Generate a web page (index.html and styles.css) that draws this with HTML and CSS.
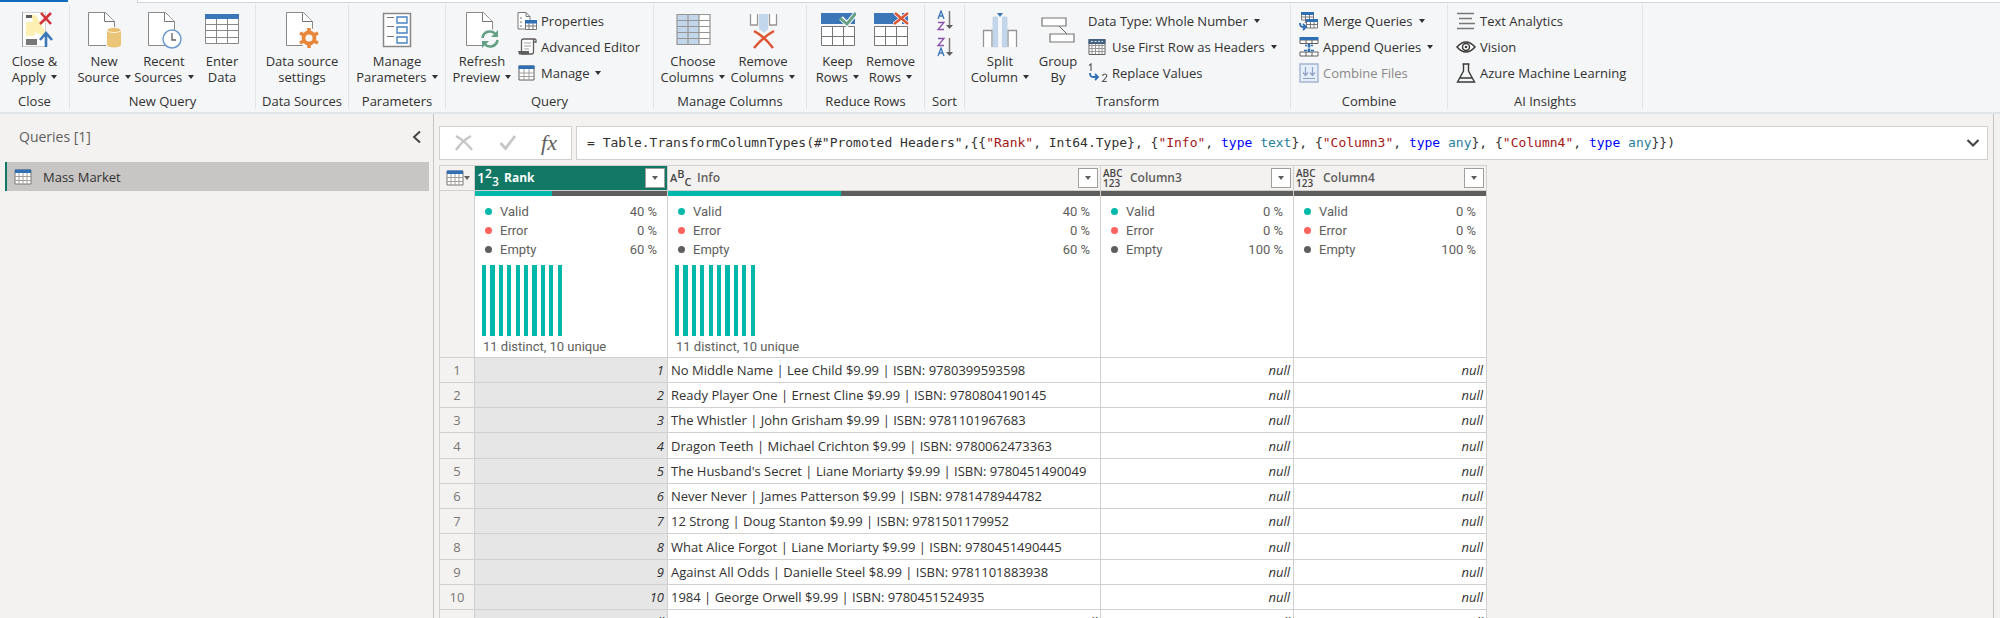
FILE: index.html
```html
<!DOCTYPE html>
<html lang="en">
<head>
<meta charset="utf-8">
<title>Power Query Editor</title>
<link rel="stylesheet" href="styles.css">
</head>
<body>
<svg class="defs" aria-hidden="true">
  <symbol id="i-page" viewBox="0 0 36 38"><path d="M2.500 1.500h17l9 9v24h-26z" fill="#fff" stroke="#8a8886"/><path d="M18.500 1.500v9h10" fill="#fff" stroke="#797775"/></symbol>
  <symbol id="i-grid" viewBox="0 0 18 16"><path d="M1 1h16v14H1z" fill="#fff" stroke="#797775"/><path d="M1 7.500h16M1 11.500h16M5 4v11M9 4v11M13 4v11" stroke="#a19f9d" fill="none"/><path d="M1 .5h16v3.500H1z" fill="#2f6fb3"/></symbol>
</svg>
<div class="tabs"><span class="tab-file"></span><span class="tab-home"></span><span class="tab-rest"></span></div>
<header class="ribbon">
  <section class="group">
    <div class="tools">
      <button class="big w-close"><svg width="36" height="38" viewBox="0 0 36 38"><path d="M5.500 1.500h23v34h-23z" fill="#fff" stroke="#d2d0ce"/><path d="M5.500 1v35" stroke="#a19f9d"/><path d="M9 11h9v14H9zM14 4h5l10 18v4l-10-4z" fill="#fdf0b2"/><path d="M9 4h6v3H9z" fill="#605e5c"/><path d="M9 28h11v6H9z" fill="#797775"/><path d="M24 2l10 11M34 2L23 13" stroke="#d13438" stroke-width="2.600"/><path d="M29 36V23M23 29l6-7 6 7" fill="none" stroke="#3b78b5" stroke-width="2.600"/></svg><span>Close &amp;<br>Apply <i class="caret"></i></span></button>
    </div>
    <h2>Close</h2>
  </section>
  <section class="group">
    <div class="tools">
      <button class="big w-60"><svg width="36" height="38" viewBox="0 0 36 38"><use href="#i-page"/><path d="M20 18h16v18H20z" fill="#f5f6f8"/><path d="M21 19v15a7 2.500 0 0 0 14 0V19z" fill="#ecc678"/><ellipse cx="28" cy="19" rx="7" ry="2.500" fill="#e8bf6e" stroke="#fff" stroke-width=".8"/></svg><span>New<br>Source <i class="caret"></i></span></button>
      <button class="big w-60"><svg width="36" height="38" viewBox="0 0 36 38"><use href="#i-page"/><circle cx="26" cy="28" r="9" fill="#fff" stroke="#6d9bcd" stroke-width="1.500"/><path d="M26 22v7h4" fill="none" stroke="#605e5c" stroke-width="1.300"/></svg><span>Recent<br>Sources <i class="caret"></i></span></button>
      <button class="big w-56"><svg width="36" height="38" viewBox="0 0 36 38"><path d="M1.500 4.500h33v28h-33z" fill="#fff" stroke="#8a8886"/><path d="M1 13.500h34M1 19.500h34M1 26.500h34M12.500 8v24M23.500 8v24" stroke="#8a8886"/><path d="M1 3h34v5H1z" fill="#3a76b8"/></svg><span>Enter<br>Data</span></button>
    </div>
    <h2>New Query</h2>
  </section>
  <section class="group">
    <div class="tools">
      <button class="big w-84"><svg width="36" height="38" viewBox="0 0 36 38"><use href="#i-page"/><circle cx="25" cy="27" r="10" fill="#f5f6f8"/><circle cx="25" cy="27" r="5.500" fill="none" stroke="#e8873a" stroke-width="3.800"/><path d="M25 17v4M25 33v4M16 22l4 2M30 30l4 2M16 32l4-2M30 24l4-2" stroke="#e8873a" stroke-width="3.600"/></svg><span>Data source<br>settings</span></button>
    </div>
    <h2>Data Sources</h2>
  </section>
  <section class="group">
    <div class="tools">
      <button class="big w-88"><svg width="36" height="38" viewBox="0 0 36 38"><path d="M4.500 2.500h27v33h-27z" fill="#fff" stroke="#8a8886" stroke-width="1.500"/><path d="M8 6.500h7M8 15.500h7M8 25.500h7" stroke="#797775"/><path d="M18 6h10v6H18zM18 16h10v6H18zM18 26h10v6H18z" fill="#fff" stroke="#4a84c4" stroke-width="1.400"/></svg><span>Manage<br>Parameters <i class="caret"></i></span></button>
    </div>
    <h2>Parameters</h2>
  </section>
  <section class="group">
    <div class="tools">
      <button class="big w-64"><svg width="36" height="38" viewBox="0 0 36 38"><use href="#i-page"/><circle cx="26" cy="28" r="10" fill="#f5f6f8"/><path d="M18.500 27a7.500 7.500 0 0 1 13-4M33.500 29a7.500 7.500 0 0 1-13 4" fill="none" stroke="#63a084" stroke-width="2.600"/><path d="M34 19v7h-7zM18 37v-7h7z" fill="#63a084"/></svg><span>Refresh<br>Preview <i class="caret"></i></span></button>
      <div class="stack">
        <button class="small"><svg width="20" height="20" viewBox="0 0 20 20"><path d="M1 1.500h8l4 4V18H1z" fill="#fff" stroke="#797775"/><path d="M9 1.500v4h4M3 7h2M3 11h2M3 15h2" fill="none" stroke="#797775"/><path d="M8.500 10.500h11v8h-11z" fill="#fff" stroke="#797775"/><path d="M8 15h12M12 12v7M16 12v7" stroke="#797775"/><path d="M8 9h12v3.500H8z" fill="#2f6fb3"/></svg>Properties</button>
        <button class="small"><svg width="20" height="20" viewBox="0 0 20 20"><path d="M4.500 14V4q0-2 2-2h10v13q0 2-2 2H4" fill="#fff" stroke="#605e5c" stroke-width="1.300"/><path d="M16 5h3V3q0-1-2-1" fill="none" stroke="#605e5c" stroke-width="1.300"/><path d="M7 6h7M7 9h7M7 12h5" stroke="#a19f9d"/><path d="M1 14h11v3.500H2z" fill="#605e5c"/></svg>Advanced Editor</button>
        <button class="small"><svg width="20" height="18" viewBox="0 0 20 18"><path d="M2 2h15v14H2z" fill="#fff" stroke="#605e5c"/><path d="M2 9h15M2 12.500h15M7 5v11M12 5v11" stroke="#a19f9d"/><path d="M1.500 1.500h16V5h-16z" fill="#2f6fb3"/></svg>Manage <i class="caret"></i></button>
      </div>
    </div>
    <h2>Query</h2>
  </section>
  <section class="group">
    <div class="tools">
      <button class="big w-70"><svg width="36" height="38" viewBox="0 0 36 38"><path d="M2 3.500h33v30H2z" fill="#fff"/><path d="M2 3.500h22v30H2z" fill="#c3d7ec"/><path d="M2 3.500h33v30H2zM2 9.500h33M2 15.500h33M2 21.500h33M2 27.500h33M13 3v30M24 3v30" fill="none" stroke="#979593" stroke-width="1.200"/></svg><span>Choose<br>Columns <i class="caret"></i></span></button>
      <button class="big w-70"><svg width="36" height="38" viewBox="0 0 36 38"><path d="M5.500 3v11h7V3M31.500 3v11h-7V3" fill="#fff" stroke="#979593" stroke-width="1.300"/><path d="M14 3h9v15l-4 4-5-4z" fill="#c3d7ec"/><path d="M9 20q11 6 19 17M29 20Q18 26 9 37" fill="none" stroke="#dc5535" stroke-width="2.500"/></svg><span>Remove<br>Columns <i class="caret"></i></span></button>
    </div>
    <h2>Manage Columns</h2>
  </section>
  <section class="group">
    <div class="tools">
      <button class="big w-53"><svg width="36" height="38" viewBox="0 0 36 38"><path d="M1 2h34v11H1z" fill="#3a76b8"/><path d="M1.500 15.500h33v19h-33zM1 25.500h34M12.500 15v20M23.500 15v20" fill="#fff" stroke="#797775"/><path d="M21 7l6 6L37 1" fill="none" stroke="#f5f6f8" stroke-width="5"/><path d="M20 7l7 6L36 2" fill="none" stroke="#63a084" stroke-width="2.800"/></svg><span>Keep<br>Rows <i class="caret"></i></span></button>
      <button class="big w-53"><svg width="36" height="38" viewBox="0 0 36 38"><path d="M1 2h19l6 5.500-6 5.500H1z" fill="#3a76b8"/><path d="M29 2h6v11h-6z" fill="#3a76b8"/><path d="M1.500 15.500h33v19h-33zM1 25.500h34M12.500 15v20M23.500 15v20" fill="#fff" stroke="#797775"/><path d="M22 2l13 11M35 2L21 13" stroke="#fff" stroke-width="4"/><path d="M22 2l13 11M35 2L21 13" stroke="#dc5535" stroke-width="2.400"/></svg><span>Remove<br>Rows <i class="caret"></i></span></button>
    </div>
    <h2>Reduce Rows</h2>
  </section>
  <section class="group">
    <div class="tools sort">
      <button class="icon-only" aria-label="Sort ascending"><svg width="18" height="22" viewBox="0 0 18 22"><path d="M2 9l3-8 3 8M3 6h4" fill="none" stroke="#3a76b8" stroke-width="1.300"/><path d="M2 12.500h6L2 19.500h6" fill="none" stroke="#8a52a8" stroke-width="1.300"/><path d="M13.500 1v16" stroke="#797775" stroke-width="1.500"/><path d="M10 15h7l-3.500 4z" fill="#605e5c"/></svg></button>
      <button class="icon-only" aria-label="Sort descending"><svg width="18" height="22" viewBox="0 0 18 22"><path d="M2 1.500h6L2 8.500h6" fill="none" stroke="#8a52a8" stroke-width="1.300"/><path d="M2 19l3-8 3 8M3 16h4" fill="none" stroke="#3a76b8" stroke-width="1.300"/><path d="M13.500 1v16" stroke="#797775" stroke-width="1.500"/><path d="M10 15h7l-3.500 4z" fill="#605e5c"/></svg></button>
    </div>
    <h2>Sort</h2>
  </section>
  <section class="group">
    <div class="tools">
      <button class="big w-62"><svg width="36" height="38" viewBox="0 0 36 38"><path d="M1.500 36V19.500H10V36M34.500 36V19.500H26V36" fill="#fff" stroke="#979593" stroke-width="1.300"/><path d="M11 6h4.500v30H11zM20.500 6H25v30h-4.500z" fill="#c3d7ec" stroke="#b3c9e2" stroke-width=".6"/><path d="M15 2h6l-3 4z" fill="#3a76b8"/></svg><span>Split<br>Column <i class="caret"></i></span></button>
      <button class="big w-54"><svg width="36" height="38" viewBox="0 0 36 38"><path d="M19 15l8 8" stroke="#605e5c"/><path d="M2 7h24v8H2zM10 23h24v8H10z" fill="#fff" stroke="#797775" stroke-width="1.200"/></svg><span>Group<br>By</span></button>
      <div class="stack">
        <button class="small">Data Type: Whole Number <i class="caret"></i></button>
        <button class="small"><svg width="20" height="18" viewBox="0 0 20 18"><path d="M1 1.500h16v15H1z" fill="#fff" stroke="#605e5c"/><path d="M1 7.500h16M1 10.500h16M1 13.500h16M4 5v11M7.500 5v11M11 5v11M14 5v11" stroke="#979593"/><path d="M.5 1h17v5H.5z" fill="#44617f"/><path d="M3 3.500h12" stroke="#d5e3f2" stroke-dasharray="2 1.500" stroke-width="1.200"/></svg>Use First Row as Headers <i class="caret"></i></button>
        <button class="small"><svg width="20" height="20" viewBox="0 0 20 20"><path d="M1 2.500L3 1v7" fill="none" stroke="#605e5c" stroke-width="1.200"/><path d="M2 10q0 4 3 4h5M7 11l3 3-3 3" fill="none" stroke="#2f6fb3" stroke-width="1.800"/><path d="M14.500 13q.5-2 2.300-2 2 0 2 2 0 1-4.300 5.500H19" fill="none" stroke="#605e5c" stroke-width="1.200"/></svg>Replace Values</button>
      </div>
    </div>
    <h2>Transform</h2>
  </section>
  <section class="group">
    <div class="tools">
      <div class="stack lead">
        <button class="small"><svg width="20" height="20" viewBox="0 0 20 20"><path d="M2.500 2h12v7h-12zM2 6h12M6.500 4v8M10.500 4v4" fill="#fff" stroke="#797775"/><path d="M2 1h13v3H2z" fill="#2f6fb3"/><path d="M7.500 9h11v8h-11zM7 13.500h12M11.500 11v6M15 11v6" fill="#fff" stroke="#797775"/><path d="M7 8h12v3H7z" fill="#2f6fb3"/><path d="M1 12q0 4 3 4h2M4 13l3 3-3 3" fill="none" stroke="#2f6fb3" stroke-width="1.800"/></svg>Merge Queries <i class="caret"></i></button>
        <button class="small"><svg width="20" height="20" viewBox="0 0 20 20"><path d="M1 3h18v3.500H1zM1 15h18v4H1zM7 3v3.500M13 3v3.500M7 15v4M13 15v4" fill="#fff" stroke="#605e5c"/><path d="M.5 0h19v3H.5z" fill="#2f6fb3"/><path d="M10 7v8" stroke="#2f6fb3" stroke-width="2.500" stroke-dasharray="3.500 1"/><path d="M6 8.500h2M12 8.500h2M5 13.500h3M12 13.500h3" stroke="#2f6fb3" stroke-width="1.500"/></svg>Append Queries <i class="caret"></i></button>
        <button class="small muted" disabled><svg width="20" height="20" viewBox="0 0 20 20"><path d="M1 1h18v18H1z" fill="#e6eefa" stroke="#a4b5d3" stroke-width="1.400"/><path d="M6.500 4v8M4 9.500l2.500 3L9 9.500M13.500 4v8M11 9.500l2.500 3 2.500-3M4 15.500h12" fill="none" stroke="#8fa3c6" stroke-width="1.200"/></svg>Combine Files</button>
      </div>
    </div>
    <h2>Combine</h2>
  </section>
  <section class="group">
    <div class="tools">
      <div class="stack lead">
        <button class="small"><svg width="20" height="20" viewBox="0 0 20 20"><path d="M1 2.500h17M3 7.500h13M3 12.500h16M1 17.500h17" stroke="#797775" stroke-width="1.300"/></svg>Text Analytics</button>
        <button class="small"><svg width="20" height="20" viewBox="0 0 20 20"><path d="M1 10q9-10 18 0-9 10-18 0z" fill="#fff" stroke="#3b3a39" stroke-width="1.500"/><circle cx="10" cy="10" r="3.500" fill="none" stroke="#3b3a39" stroke-width="1.500"/><circle cx="10" cy="10" r="1.300" fill="#3b3a39"/></svg>Vision</button>
        <button class="small"><svg width="20" height="20" viewBox="0 0 20 20"><path d="M6.500 1h7M7.500 1v7L1.500 19h17l-6-11V1M4 15h12" fill="none" stroke="#3b3a39" stroke-width="1.400"/></svg>Azure Machine Learning</button>
      </div>
    </div>
    <h2>AI Insights</h2>
  </section>
</header>
<div class="workspace">
  <aside class="queries">
    <div class="queries-head"><h1>Queries [1]</h1><button class="collapse" aria-label="Collapse"><svg width="10" height="14" viewBox="0 0 10 14"><path d="M8 1.500L2 7l6 5.500" fill="none" stroke="#484644" stroke-width="2"/></svg></button></div>
    <button class="query"><svg width="18" height="16"><use href="#i-grid"/></svg>Mass Market</button>
  </aside>
  <main class="editor">
    <div class="formula-bar">
      <div class="formula-tools">
        <button aria-label="Cancel"><svg width="20" height="18" viewBox="0 0 20 18"><path d="M2 2q9 5 16 14M17 2Q8 7 2 16" fill="none" stroke="#c8c6c4" stroke-width="2.400"/></svg></button>
        <button aria-label="Commit"><svg width="18" height="18" viewBox="0 0 18 18"><path d="M1.500 9l5 5.500L16 2" fill="none" stroke="#c8c6c4" stroke-width="2.800"/></svg></button>
        <button class="fx" aria-label="Add step">fx</button>
      </div>
      <div class="formula"><code>= Table.TransformColumnTypes(#"Promoted Headers",{{<b>"Rank"</b>, Int64.Type}, {<b>"Info"</b>, <i>type</i> <u>text</u>}, {<b>"Column3"</b>, <i>type</i> <u>any</u>}, {<b>"Column4"</b>, <i>type</i> <u>any</u>}})</code><button aria-label="Expand"><svg width="14" height="10" viewBox="0 0 14 10"><path d="M1.500 2L7 7.500 12.500 2" fill="none" stroke="#484644" stroke-width="2.200"/></svg></button></div>
    </div>
    <table class="grid">
      <colgroup><col class="c-index"><col class="c-std"><col class="c-info"><col class="c-std"><col class="c-std"></colgroup>
      <thead>
        <tr class="names">
          <th><button class="table-menu" aria-label="Table menu"><svg width="18" height="16"><use href="#i-grid"/></svg><i class="caret"></i></button></th>
          <th class="selected"><div class="head"><span class="type t-num"><span>1</span><sup>2</sup><sub>3</sub></span><span class="name">Rank</span><button class="filter" aria-label="Filter Rank"><i class="caret"></i></button></div></th>
          <th><div class="head"><span class="type t-num t-text"><span>A</span><sup>B</sup><sub>C</sub></span><span class="name">Info</span><button class="filter" aria-label="Filter Info"><i class="caret"></i></button></div></th>
          <th><div class="head"><span class="type t-any">ABC<br>123</span><span class="name">Column3</span><button class="filter" aria-label="Filter Column3"><i class="caret"></i></button></div></th>
          <th><div class="head"><span class="type t-any">ABC<br>123</span><span class="name">Column4</span><button class="filter" aria-label="Filter Column4"><i class="caret"></i></button></div></th>
        </tr>
        <tr class="stats">
          <td class="idx"></td>
          <td><div class="quality"><span style="width:40%"></span></div><dl><dt class="valid">Valid</dt><dd>40 %</dd><dt class="error">Error</dt><dd>0 %</dd><dt class="empty">Empty</dt><dd>60 %</dd></dl><div class="bars"></div><p>11 distinct, 10 unique</p></td>
          <td><div class="quality"><span style="width:40%"></span></div><dl><dt class="valid">Valid</dt><dd>40 %</dd><dt class="error">Error</dt><dd>0 %</dd><dt class="empty">Empty</dt><dd>60 %</dd></dl><div class="bars"></div><p>11 distinct, 10 unique</p></td>
          <td><div class="quality"></div><dl><dt class="valid">Valid</dt><dd>0 %</dd><dt class="error">Error</dt><dd>0 %</dd><dt class="empty">Empty</dt><dd>100 %</dd></dl></td>
          <td><div class="quality"></div><dl><dt class="valid">Valid</dt><dd>0 %</dd><dt class="error">Error</dt><dd>0 %</dd><dt class="empty">Empty</dt><dd>100 %</dd></dl></td>
        </tr>
      </thead>
      <tbody>
        <tr><td class="idx">1</td><td class="num">1</td><td>No Middle Name | Lee Child $9.99 | ISBN: 9780399593598</td><td class="nul">null</td><td class="nul">null</td></tr>
        <tr><td class="idx">2</td><td class="num">2</td><td>Ready Player One | Ernest Cline $9.99 | ISBN: 9780804190145</td><td class="nul">null</td><td class="nul">null</td></tr>
        <tr><td class="idx">3</td><td class="num">3</td><td>The Whistler | John Grisham $9.99 | ISBN: 9781101967683</td><td class="nul">null</td><td class="nul">null</td></tr>
        <tr><td class="idx">4</td><td class="num">4</td><td>Dragon Teeth | Michael Crichton $9.99 | ISBN: 9780062473363</td><td class="nul">null</td><td class="nul">null</td></tr>
        <tr><td class="idx">5</td><td class="num">5</td><td>The Husband's Secret | Liane Moriarty $9.99 | ISBN: 9780451490049</td><td class="nul">null</td><td class="nul">null</td></tr>
        <tr><td class="idx">6</td><td class="num">6</td><td>Never Never | James Patterson $9.99 | ISBN: 9781478944782</td><td class="nul">null</td><td class="nul">null</td></tr>
        <tr><td class="idx">7</td><td class="num">7</td><td>12 Strong | Doug Stanton $9.99 | ISBN: 9781501179952</td><td class="nul">null</td><td class="nul">null</td></tr>
        <tr><td class="idx">8</td><td class="num">8</td><td>What Alice Forgot | Liane Moriarty $9.99 | ISBN: 9780451490445</td><td class="nul">null</td><td class="nul">null</td></tr>
        <tr><td class="idx">9</td><td class="num">9</td><td>Against All Odds | Danielle Steel $8.99 | ISBN: 9781101883938</td><td class="nul">null</td><td class="nul">null</td></tr>
        <tr><td class="idx">10</td><td class="num">10</td><td>1984 | George Orwell $9.99 | ISBN: 9780451524935</td><td class="nul">null</td><td class="nul">null</td></tr>
        <tr><td class="idx">11</td><td class="num">null</td><td class="nul">null</td><td class="nul">null</td><td class="nul">null</td></tr>
      </tbody>
    </table>
  </main>
</div>
</body>
</html>
```

FILE: styles.css
```css
* { box-sizing: border-box; }
body {
  margin: 0;
  height: 100vh;
  overflow: hidden;
  display: flex;
  flex-direction: column;
  background: #f3f2f1;
  color: #323130;
  font: 13px/16px "Open Sans", "Noto Sans", sans-serif;
}
button {
  border: 0;
  padding: 0;
  margin: 0;
  background: none;
  color: inherit;
  font: inherit;
}
h1, h2, p, dl, dd { margin: 0; font-weight: 400; }
svg { display: block; flex: none; }
.defs { position: absolute; width: 0; height: 0; }
.caret {
  display: inline-block;
  flex: none;
  border: 3px solid transparent;
  border-top: 4px solid #323130;
  border-bottom: 0;
  margin-left: 2px;
  vertical-align: 3px;
}

/* tab strip */
.tabs { display: flex; height: 3px; flex: none; background: #f5f6f8; }
.tab-file { width: 68px; height: 2px; background: #0f6cbd; }
.tab-home { width: 69px; }
.tab-rest { flex: 1; background: #fff; border-left: 1px solid #d2d5d9; border-bottom: 1px solid #d2d5d9; }

/* ribbon */
.ribbon {
  flex: none;
  display: grid;
  grid-template-columns: 70px 186px 93px 97px 208px 153px 118px 40px 326px 157px 195px;
  padding: 2px 0 3px;
  background: #f5f6f8;
  border-bottom: 2px solid #e1e4e7;
}
.group { border-right: 1px solid #e1e3e6; }
.group h2 { font-size: 13px; line-height: 16px; text-align: center; color: #323130; }
.tools { display: flex; height: 88px; padding: 6px 4px 0; }
.big { display: flex; flex-direction: column; align-items: center; gap: 4px; white-space: nowrap; }
.big span { display: block; }
.w-close { width: 62px; }
.w-53 { width: 53px; }
.w-54 { width: 54px; }
.w-56 { width: 56px; }
.w-60 { width: 60px; }
.w-62 { width: 62px; }
.w-64 { width: 64px; }
.w-70 { width: 70px; }
.w-84 { width: 84px; }
.w-88 { width: 88px; }
.stack { display: flex; flex-direction: column; padding-left: 3px; margin-top: -3px; }
.lead { padding-left: 4px; }
.small { display: flex; align-items: center; gap: 4px; height: 26px; white-space: nowrap; }
.muted { color: #8a8886; }
.sort { flex-direction: column; align-items: center; gap: 5px; padding-top: 5px; }

/* query list */
.workspace { flex: 1; min-height: 0; display: flex; padding-right: 6px; }
.queries { width: 434px; flex: none; border-right: 1px solid #c8c6c4; padding: 12px 4px 0 5px; }
.queries-head { display: flex; justify-content: space-between; align-items: center; height: 22px; padding: 0 7px 0 14px; }
.queries-head h1 { font-size: 14px; color: #605e5c; }
.query {
  display: flex;
  align-items: center;
  gap: 11px;
  width: 100%;
  height: 29px;
  margin-top: 14px;
  padding-left: 7px;
  border-left: 2px solid #117865;
  background: #c8c6c4;
}

/* editor */
.editor { flex: 1; min-width: 0; padding: 12px 5px 0; border-right: 1px solid #c8c6c4; }
.formula-bar { display: flex; gap: 4px; margin-bottom: 5px; }
.formula-tools, .formula { display: flex; align-items: center; height: 34px; background: #fff; border: 1px solid #d2d0ce; }
.formula-tools { width: 133px; justify-content: space-between; padding: 0 14px; }
.fx { font: italic 22px/22px "Liberation Serif", serif; color: #605e5c; }
.formula { flex: 1; justify-content: space-between; padding: 0 7px 0 10px; }
.formula code { font: 13px/18px "DejaVu Sans Mono", monospace; white-space: pre; color: #323130; }
.formula b { font-weight: 400; color: #a31515; }
.formula i { font-style: normal; color: #0000ff; }
.formula u { text-decoration: none; color: #267f99; }

/* data preview */
.grid { width: 1047px; table-layout: fixed; border-collapse: collapse; background: #fff; }
.c-index { width: 35px; }
.c-std { width: 193px; }
.c-info { width: 433px; }
.grid th, .grid td { border: 1px solid #d2d0ce; padding: 0; height: 25px; }
.grid .names th { height: 25px; background: #f3f2f1; font-weight: 400; text-align: left; }
.grid .names .selected { background: #117865; color: #fff; }
.table-menu { display: flex; align-items: center; padding-left: 6px; }
.head { display: flex; align-items: center; padding: 0 2px; color: #605e5c; }
.selected .head { color: #fff; }
.type { width: 21px; flex: none; font-family: "Open Sans", sans-serif; font-weight: 600; color: #484644; }
.selected .type { color: #fff; }
.t-num { display: flex; font-size: 14px; line-height: 14px; height: 20px; align-items: center; }
.t-num sup, .t-num sub { font-size: 12px; line-height: 12px; }
.t-num sup { align-self: flex-start; }
.t-num sub { align-self: flex-end; }
.t-text, .t-text sup, .t-text sub { font-size: 11px; }
.t-any { font-size: 10px; line-height: 10px; }
.name { flex: 1; padding-left: 6px; font-weight: 600; font-size: 12px; }
.selected .name { font-weight: 700; }
.filter {
  display: flex;
  align-items: center;
  justify-content: center;
  width: 20px;
  height: 20px;
  background: #fff;
  border: 1px solid #a19f9d;
}
.filter .caret, .table-menu .caret { margin-left: 0; border-top-color: #605e5c; }
.stats td { color: #605e5c; font: 13px/19px "Roboto", sans-serif; }
.grid .stats td { vertical-align: top; height: 167px; }
.quality { height: 5px; background: #605e5c; }
.quality span { display: block; height: 100%; background: #01b8aa; }
.grid .idx { background: #f3f2f1; color: #797775; text-align: center; }
.stats dl { display: grid; grid-template-columns: 1fr auto; padding: 6px 10px 0; }
.stats dt { display: flex; align-items: center; gap: 8px; }
.stats dd { text-align: right; }
.stats dt::before { content: ""; width: 7px; height: 7px; border-radius: 50%; background: #605e5c; }
.stats .valid::before { background: #01b8aa; }
.stats .error::before { background: #fd625e; }
.bars {
  width: 84px;
  height: 71px;
  margin: 6px 0 0 7px;
  background: repeating-linear-gradient(90deg, #01b8aa 0 5%, #fff 5% 10%);
}
.stats p { padding: 1px 0 0 8px; font: 13px/20px "Roboto", sans-serif; }
.grid tbody td { padding: 0 3px; white-space: nowrap; font-size: 13px; line-height: 16px; }
.grid tbody tr:nth-child(4n) td { height: 26px; }
.num { background: #e6e6e6; text-align: right; font-style: italic; }
.nul { text-align: right; font-style: italic; }
```
